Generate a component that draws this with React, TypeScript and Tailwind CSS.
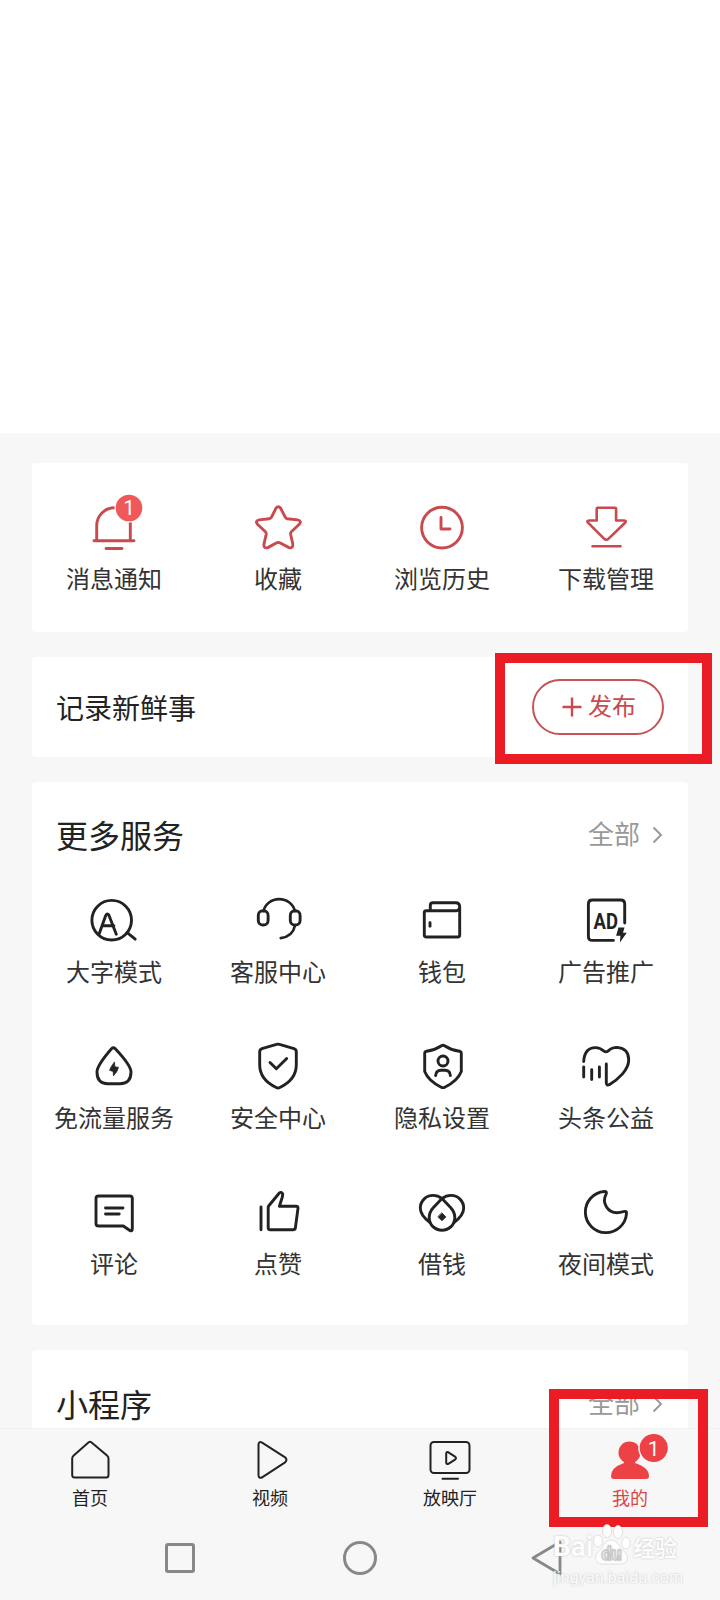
import type { ReactNode } from "react"

type Item = { label: string; icon: ReactNode }

const shortcuts: Item[] = [
  {
    label: "消息通知",
    icon: (
      <>
        <path d="M12.7 43V28.5a17.8 17.8 0 0 1 17.8-17.8h1M46.3 26v17M10 43.7h40M22 51.5h16" />
        <circle cx="45" cy="11" r="14.5" fill="#fff" stroke="none" />
        <circle cx="45" cy="11" r="13.3" fill="#f0585a" stroke="none" />
        <text x="45" y="18" textAnchor="middle" fontSize="20" fill="#fff" stroke="none">
          1
        </text>
      </>
    ),
  },
  {
    label: "收藏",
    icon: (
      <path d="M28 11.2q2.3-3 4.6 0l4.6 9q.6 1.3 2 1.5l10.3 1.2q4.6.9 1.8 4.4l-7.7 7.2q-1.3 1.2-1 2.8l2.2 9.7q.4 4.8-3.8 3.6l-8.7-4.6q-2-1-4 0l-8.5 4.6q-4.4 1.2-3.8-3.6l2.2-9.7q.3-1.6-1-2.8l-7.7-7.2q-2.8-3.5 1.8-4.4l10-1.2q1.6-.2 2.2-1.5z" />
    ),
  },
  {
    label: "浏览历史",
    icon: (
      <>
        <circle cx="30" cy="30.6" r="20.4" />
        <path d="M29 20.5V32h9" />
      </>
    ),
  },
  {
    label: "下载管理",
    icon: (
      <path d="M20.7 11.7q0-1 1-1h17.4q1 0 1 1v11.8h8q2.6.2 1 2.2L32.6 41.6q-2.3 2.4-4.6 0L12 25.7q-1.6-2 1-2.2h7.7zM16.5 49.3h28" strokeWidth="2.6" />
    ),
  },
]

const services: Item[] = [
  {
    label: "大字模式",
    icon: (
      <>
        <circle cx="27.7" cy="30.2" r="19.8" />
        <path d="M15.3 43.6l6.4-18q1.4-3 3.2-.4l7.4 19M18.7 35.7h11.2M43.2 42.7l8 6.4" />
      </>
    ),
  },
  {
    label: "客服中心",
    icon: (
      <>
        <path d="M15.5 21.2a16 15 0 0 1 31.4 0M47 35.5q-2.2 11-14.3 12.6" strokeWidth="2.6" />
        <rect x="10.3" y="20.8" width="9.8" height="14.2" rx="4.6" />
        <rect x="42.3" y="20.8" width="9.8" height="14.2" rx="4.6" />
      </>
    ),
  },
  {
    label: "钱包",
    icon: (
      <>
        <path d="M44.5 20.7H14.3q-2 0-2 2V45q0 2 2 2h31.4q2 0 2-2V17q0-4.3-4-4.3H21q-2.7 0-2.7 2.7v5M44.5 20.7q3.2-.2 3.2-3.6" />
        <path d="M18 32.8v3.4" />
      </>
    ),
  },
  {
    label: "广告推广",
    icon: (
      <>
        <path d="M48.7 33V14q0-4-4-4H16.4q-4 0-4 4v32.4q0 4 4 4h21" />
        <text x="17.6" y="38.6" textLength="24.4" lengthAdjust="spacingAndGlyphs" fontSize="22.5" fontWeight="700" fill="#222" stroke="none">
          AD
        </text>
        <path d="M42.5 37.6h6L47 42.8h3.8l-6.9 9.6.5-6.6h-4.3z" fill="#222" stroke="none" />
      </>
    ),
  },
  {
    label: "免流量服务",
    icon: (
      <>
        <path d="M27.5 12.8q1.9-2 3.8 0Q47 29.5 47 36q0 11.7-11 11.7H23.7q-10.7 0-10.7-11.7Q13 29.5 27.5 12.8z" />
        <path d="M30.5 26.3l.3 4.4 3.7.7-1.7 4.2-3.3 4.2-.3-4.3-3.6-1.2 1.6-3.6z" fill="#222" stroke="#222" strokeWidth="0.8" />
      </>
    ),
  },
  {
    label: "安全中心",
    icon: (
      <path d="M28.5 8.4q1.5-.6 3 0l14.5 4.2q2.3.8 2.3 3V29q0 14.5-16.5 22.5-1.8.9-3.6 0Q11.7 43.5 11.7 29V15.6q0-2.2 2.3-3zM22 26.5l6.3 6.3 10.4-10.3" />
    ),
  },
  {
    label: "隐私设置",
    icon: (
      <>
        <path d="M29.5 9.7q1.5-1 3 0 6.5 4.2 15 5.6 1.8.3 1.8 2.2v18q-3.8 9.5-16.5 15.7-1.8.9-3.6 0Q16.5 45 12.7 35.5v-18q0-1.9 1.8-2.2 8.5-1.4 15-5.6z" />
        <circle cx="31" cy="25" r="5" />
        <path d="M23.6 39.6q.4-5.3 5.4-5.3h4q5 0 5.4 5.3" />
      </>
    ),
  },
  {
    label: "头条公益",
    icon: (
      <path d="M7.7 25.5Q8.5 11.6 19.5 11.6q4.5 0 8.5 3.5 2 1.5 4 0 4-3.7 9-3.7 11.7.8 11.7 12.6C52.7 34 42 43.5 33.3 48.7q-2.8 1.2-3-1.7V28M7.7 31v10M15.7 33.6v10M23.4 31v10" />
    ),
  },
  {
    label: "评论",
    icon: (
      <path d="M14.5 14h31.3q2.5 0 2.5 2.5V47q0 2.7-2.4 1.5L39.3 44H14.5Q12 44 12 41.5v-25Q12 14 14.5 14zM21.5 26H39M21.5 32h13.7" />
    ),
  },
  {
    label: "点赞",
    icon: (
      <path d="M13 25v22.7M20.2 25.5q0-1 .8-2L31.3 11q2-1.7 3.4 1l-.3 2.8-3 9.5h16.8q2 0 1.8 2l-2.6 19.5q-.3 2-2.3 2H22.2q-2 0-2-2z" />
    ),
  },
  {
    label: "借钱",
    icon: (
      <>
        <path d="M30 16.5L21 26C18 29.4 17.2 32 17.2 35.5C17.2 43 23 48.2 30 48.2S42.8 43 42.8 35.5C42.8 32 42 29.4 39 26z" />
        <path d="M30 16.5Q26 13.4 21 13.4A12.7 12.7 0 0 0 8.3 26.100Q8.300 33.500 18 40.500M30 16.500Q34 13.400 39 13.400A12.700 12.700 0 0 1 51.700 26.100Q51.700 33.500 42 40.500" />
        <path d="M30 31l3.9 3.9-3.9 3.9-3.9-3.9z" fill="#222" stroke="#222" strokeWidth="0.8" />
      </>
    ),
  },
  {
    label: "夜间模式",
    icon: (
      <path d="M28.3 9.5q3-.3 1.8 2.7-3.5 6.8.4 12.8 5 8 16.8 4.7 3.7-1.2 3.2 1.8A20.6 20.6 0 1 1 28.3 9.5z" />
    ),
  },
]

const tabs: Item[] = [
  {
    label: "首页",
    icon: (
      <path d="M23.7 6.3q1.3-1 2.6 0L42 19.4q1.5 1.3 1.5 3V39q0 2.5-2.5 2.5H9.7Q7.2 41.5 7.2 39V22.4q0-1.7 1.5-3z" />
    ),
  },
  {
    label: "视频",
    icon: <path d="M13.5 8.5q0-3.5 3.6-1.9l23 14.7q2.7 2.5 0 5L17.5 41.2q-4 1.6-4-1.9z" />,
  },
  {
    label: "放映厅",
    icon: (
      <>
        <rect x="5.5" y="6" width="39" height="31" rx="3.5" />
        <path d="M17.5 42.7H33M21.2 17.5q.2-2 2.2-1.2l7 4.6q1.2 1.2 0 2.4l-7 4.5q-2 .8-2.2-1.2z" />
      </>
    ),
  },
]

function IconGrid({ items, color }: { items: Item[]; color: string }) {
  return (
    <div className="grid grid-cols-4 gap-y-[47px]">
      {items.map((item) => (
        <div key={item.label} className="flex flex-col items-center">
          <svg
            width="60"
            height="60"
            viewBox="0 0 60 60"
            className="overflow-visible"
            fill="none"
            stroke={color}
            strokeWidth="2.9"
            strokeLinecap="round"
            strokeLinejoin="round"
          >
            {item.icon}
          </svg>
          <span className="mt-[7px] text-2xl leading-8 text-[#333]">{item.label}</span>
        </div>
      ))}
    </div>
  )
}

function CardHeader({ title }: { title: string }) {
  return (
    <div className="flex h-[108px] items-center justify-between pl-6 pr-[25px]">
      <h2 className="pt-0.5 text-[32px] leading-10 text-[#222]">{title}</h2>
      <div className="flex items-center gap-3 pb-[3px] text-[26px] leading-8 text-[#999]">
        <span>全部</span>
        <svg width="11" height="18" viewBox="0 0 11 18" fill="none" stroke="#999" strokeWidth="2">
          <path d="M1.5 1.5L9 9l-7.5 7.5" />
        </svg>
      </div>
    </div>
  )
}

function Watermark() {
  return (
    <div className="absolute left-[553px] top-[1521px] w-[134px] text-[#fcfcfc] [text-shadow:0_0_2px_#bbb]">
      <div className="flex h-[44px] items-end">
        <span className="pb-1 text-[28px] font-bold leading-[28px]">Bai</span>
        <svg width="38" height="42" viewBox="0 0 38 42" fill="#fff" stroke="#d8d8d8" strokeWidth="0.8">
          <ellipse cx="5" cy="18" rx="4.5" ry="6" />
          <ellipse cx="14" cy="8" rx="4.5" ry="6.5" />
          <ellipse cx="25" cy="9" rx="4.5" ry="6.5" />
          <ellipse cx="33" cy="20" rx="4.2" ry="6" />
          <path d="M18 17c7 0 8 8 14 12 5 6 2 12-5 12H10c-7 0-10-6-5-12 6-4 6-12 13-12z" />
          <text x="18.5" y="37" textAnchor="middle" fontSize="18" fontWeight="700" fill="#fff" stroke="#c4c4c4">
            du
          </text>
        </svg>
        <span className="ml-0.5 pb-[3px] text-[22px] font-bold leading-[26px]">经验</span>
      </div>
      <div className="pt-1 text-[16px] leading-[18px]">jingyan.baidu.com</div>
    </div>
  )
}

export default function App() {
  return (
    <div className="relative flex h-[1600px] w-[720px] flex-col overflow-hidden bg-[#f7f7f7] font-['Roboto','Noto_Sans_CJK_SC',sans-serif]">
      <div className="h-[433px] shrink-0 bg-white" />

      <main className="flex h-[995px] shrink-0 flex-col gap-[25px] overflow-hidden px-8 pt-[30px]">
        <section className="h-[169px] shrink-0 rounded-sm bg-white pt-[34px]">
          <IconGrid items={shortcuts} color="#c9494d" />
        </section>

        <section className="flex h-[100px] shrink-0 items-center justify-between rounded-sm bg-white pl-6 pr-6">
          <span className="pt-[5px] text-[28px] leading-9 text-[#222]">记录新鲜事</span>
          <button className="flex h-14 w-[132px] items-center justify-center gap-1.5 rounded-full border-2 border-[#c5545a] pl-0.5 text-2xl text-[#c9494d]">
            <svg width="20" height="20" viewBox="0 0 20 20" stroke="#c9494d" strokeWidth="2.4">
              <path d="M10 .5v19M.5 10h19" />
            </svg>
            发布
          </button>
        </section>

        <section className="h-[543px] shrink-0 rounded-sm bg-white">
          <CardHeader title="更多服务" />
          <IconGrid items={services} color="#222" />
        </section>

        <section className="h-[120px] shrink-0 rounded-sm bg-white pt-px">
          <CardHeader title="小程序" />
        </section>
      </main>

      {/* Tab bar */}
      <nav className="grid h-[92px] shrink-0 grid-cols-4 border-t border-[#f0f0f0] pt-[7px] text-lg leading-[26px] text-[#222]">
        {tabs.map((tab) => (
          <div key={tab.label} className="flex flex-col items-center">
            <svg width="50" height="50" viewBox="0 0 50 50" fill="none" stroke="#222" strokeWidth="2" strokeLinecap="round" strokeLinejoin="round">
              {tab.icon}
            </svg>
            <span>{tab.label}</span>
          </div>
        ))}
        <div className="flex flex-col items-center text-[#d9454a]">
          <svg width="50" height="50" viewBox="0 0 50 50" className="overflow-visible">
            <circle cx="24.5" cy="16.5" r="11" fill="#ec4145" />
            <path d="M19 23h11v4q14 4.5 14 13 0 3-3 3H9q-3 0-3-3 0-8.500 13-13z" fill="#ec4145" />
            <circle cx="48.7" cy="12" r="15.5" fill="#f7f7f7" />
            <circle cx="48.7" cy="12" r="14" fill="#ec4145" />
            <text x="48.7" y="19.5" textAnchor="middle" fontSize="21" fill="#fff">
              1
            </text>
          </svg>
          <span>我的</span>
        </div>
      </nav>

      {/* System navigation */}
      <div className="grid h-[76px] grid-cols-[90px_180px_180px_180px_90px] items-center">
        <div />
        <div className="h-[30px] w-[30px] justify-self-center rounded-[3px] border-3 border-[#888]" />
        <div className="h-[34px] w-[34px] justify-self-center rounded-full border-3 border-[#888]" />
        <svg width="32" height="36" viewBox="0 0 32 36" className="ml-[81px]" fill="none" stroke="#888" strokeWidth="2.8" strokeLinejoin="round">
          <path d="M2 18L29 2v32z" />
        </svg>
      </div>

      {/* Highlight frames */}
      <div className="absolute left-[495px] top-[653px] h-[111px] w-[217px] border-10 border-[#ec1c24]" />
      <div className="absolute left-[549px] top-[1389px] h-[138px] w-[159px] border-10 border-[#ec1c24]" />

      <Watermark />
    </div>
  )
}
